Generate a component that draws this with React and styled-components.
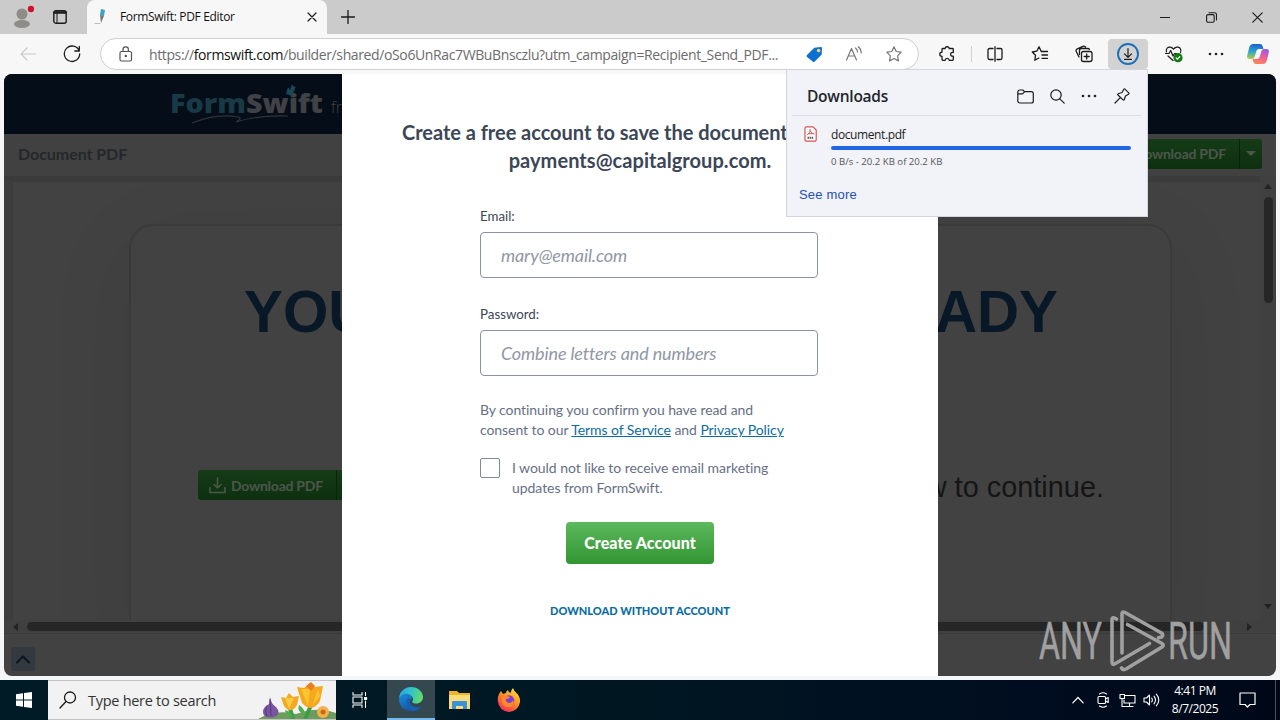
import React from "react";
import styled, { createGlobalStyle, css } from "styled-components";

const ui = `"Open Sans", "Noto Sans", sans-serif`;
const lato = `Lato, "Open Sans", sans-serif`;
const arial = `"Liberation Sans", Arial, sans-serif`;

const GlobalStyle = createGlobalStyle`
  * {
    box-sizing: border-box;
  }
  body {
    margin: 0;
    overflow: hidden;
    background: #f2f3f5;
  }
`;

const Screen = styled.div`
  position: relative;
  width: 1280px;
  height: 720px;
  display: flex;
  flex-direction: column;
  background: #f5f6f8;
  font-family: ${ui};
  overflow: hidden;
`;

const Icon = styled.svg`
  display: block;
  flex: none;
  fill: none;
  stroke: ${(p) => p.$color || "#1b1b1b"};
  stroke-width: ${(p) => p.$stroke || 1.2};
  stroke-linecap: round;
  stroke-linejoin: round;
`;

const Slot = styled.div`
  flex: none;
  width: ${(p) => p.$w || 40}px;
  height: ${(p) => p.$h || 30}px;
  display: flex;
  align-items: center;
  justify-content: center;
`;

/* tab strip */
const TabStrip = styled.div`
  flex: none;
  height: 34px;
  display: flex;
  background: #cbcbcb;
`;
const TabActions = styled.div`
  width: 87px;
  display: flex;
  align-items: center;
  padding-left: 2px;
`;
const Tab = styled.div`
  width: 240px;
  height: 34px;
  display: flex;
  align-items: center;
  padding: 0 10px 0 7px;
  background: #f7f7f7;
  border-radius: 8px 8px 0 0;
`;
const TabTitle = styled.span`
  flex: 1;
  margin-left: 9px;
  font-size: 12px;
  letter-spacing: -0.33px;
  line-height: 18px;
  color: #111;
  white-space: nowrap;
`;
const WindowButtons = styled.div`
  margin-left: auto;
  display: flex;
  align-items: center;
`;

/* address row */
const Toolbar = styled.div`
  flex: none;
  height: 40px;
  display: flex;
  align-items: center;
  padding-left: 8px;
  background: #f7f7f7;
`;
const AddressBar = styled.div`
  width: 819px;
  height: 32px;
  margin: 0 9px 0 4px;
  display: flex;
  align-items: center;
  padding: 0 4px 0 5px;
  background: #fff;
  border: 1px solid #cfcfcf;
  border-radius: 16px;
`;
const Url = styled.span`
  flex: 1;
  margin-left: 3px;
  font-size: 14px;
  letter-spacing: -0.38px;
  color: #6c6c6c;
  white-space: nowrap;
  b {
    font-weight: 400;
    color: #111;
  }
`;
const Separator = styled.div`
  width: 1px;
  height: 16px;
  margin: 0 3px;
  background: #d0d0d0;
`;
const ActiveSlot = styled(Slot)`
  margin: 0 4px;
  background: #d2d2d2;
  border-radius: 4px;
`;

/* web page */
const Page = styled.div`
  flex: none;
  height: 602px;
  margin: 0 4px;
  display: flex;
  flex-direction: column;
  background: #424242;
  border-radius: 8px;
  overflow: hidden;
`;
const SiteHeader = styled.div`
  flex: none;
  height: 60px;
  padding-left: 161px;
  background: #040d18;
`;
const DocBar = styled.div`
  flex: none;
  height: 42px;
  display: flex;
  align-items: center;
  justify-content: space-between;
  padding: 0 14px 3px;
  background: #414141;
`;
const DocName = styled.span`
  font-family: ${lato};
  font-size: 16px;
  font-weight: 700;
  letter-spacing: -0.05px;
  color: #24272b;
`;
const GreenButton = styled.div`
  width: 161px;
  height: 30px;
  display: flex;
  align-items: center;
  background: linear-gradient(#163b17, #0d300e);
  border-radius: 3px;
  color: #4c564c;
  font-family: ${lato};
  font-size: 14px;
  font-weight: 700;
  letter-spacing: -0.25px;
  white-space: nowrap;
`;
const GreenLabel = styled.div`
  flex: 1;
  height: 30px;
  display: flex;
  align-items: center;
  gap: 5px;
  padding-left: 11px;
  border-right: 1px solid #092209;
`;
const Caret = styled.div`
  margin: 0 6px;
  border: 5px solid transparent;
  border-top-color: #4c564c;
  border-bottom: 0;
`;
const Body = styled.div`
  flex: 1;
  display: flex;
  min-height: 0;
`;
const Document = styled.div`
  flex: 1;
  height: 444px;
  padding: 42px 88px 0 116px;
  border-top: 6px solid #3b3b3b;
  border-left: 9px solid #3d3d3d;
  background: #424242;
  overflow: hidden;
`;
const Card = styled.div`
  height: 430px;
  padding: 53px 66px 0 67px;
  display: flex;
  flex-direction: column;
  border: 2px solid #3a3a3a;
  border-radius: 24px;
  box-shadow: 0 20px 90px rgba(0, 0, 0, 0.07);
  background: #424242;
`;
/* the dialog covers the middle of the line */
const BigTitle = styled.div`
  display: flex;
  justify-content: space-between;
  margin: 0 46px;
  font-family: ${arial};
  font-size: 58.3px;
  line-height: 66px;
  font-weight: 700;
  color: #081826;
`;
const CardRow = styled.div`
  margin-top: 125px;
  display: flex;
  align-items: flex-start;
  justify-content: space-between;
`;
const Continue = styled.span`
  font-family: ${arial};
  font-size: 28.9px;
  line-height: 34px;
  color: #151515;
`;
const VScroll = styled.div`
  width: 16px;
  height: 444px;
  display: flex;
  flex-direction: column;
  align-items: center;
  padding: 8px 0 11px;
  background: #404040;
`;
const VThumb = styled.div`
  width: 9px;
  height: 106px;
  margin: 8px 0 auto;
  border-radius: 5px;
  background: #262626;
`;
const Arrow = styled.div`
  border: 4px solid transparent;
  ${(p) =>
    ({
      up: css`border-top: 0; border-bottom: 5px solid #222;`,
      down: css`border-bottom: 0; border-top: 5px solid #222;`,
      left: css`border-left: 0; border-right: 5px solid #222;`,
      right: css`border-right: 0; border-left: 5px solid #222;`,
    })[p.$dir]}
`;
const HScroll = styled.div`
  flex: none;
  height: 14px;
  display: flex;
  align-items: center;
  padding: 0 24px 0 9px;
  background: #404040;
  border-bottom: 1px solid #3a3a3a;
`;
const HThumb = styled.div`
  width: 1177px;
  height: 9px;
  margin: 0 auto 0 9px;
  border-radius: 5px;
  background: #262626;
`;
const Footer = styled.div`
  flex: none;
  height: 42px;
  padding: 13px 7px;
`;
const UpButton = styled.div`
  width: 24px;
  height: 24px;
  display: flex;
  align-items: center;
  justify-content: center;
  border-radius: 3px;
  background: #34383f;
`;

/* sign-up dialog */
const Dialog = styled.div`
  position: absolute;
  left: 342px;
  top: 74px;
  width: 596px;
  height: 602px;
  padding: 44px 60px 0;
  display: flex;
  flex-direction: column;
  align-items: center;
  background: #fff;
  font-family: ${lato};
  font-variant-ligatures: none;
`;
const DialogTitle = styled.h1`
  width: 476px;
  margin: 0;
  font-size: 20px;
  line-height: 28px;
  font-weight: 700;
  letter-spacing: -0.03px;
  color: #3b4656;
  white-space: nowrap;
`;
const TitleAddress = styled.div`
  text-align: center;
  letter-spacing: 0.05px;
`;
const Form = styled.div`
  width: 320px;
  margin-top: 31px;
  display: flex;
  flex-direction: column;
`;
const Label = styled.label`
  height: 22px;
  line-height: 22px;
  margin-bottom: 5px;
  font-size: 13.3px;
  color: #3b4656;
`;
const Input = styled.input`
  width: 338px;
  height: 46px;
  margin-bottom: 25px;
  padding: 0 20px;
  border: 1px solid #8b92a1;
  border-radius: 4px;
  font-family: ${lato};
  font-size: 18px;
  letter-spacing: -0.13px;
  font-variant-ligatures: none;
  &::placeholder {
    color: #8f97a5;
    opacity: 1;
    font-style: italic;
  }
`;
const Terms = styled.div`
  margin-top: -1px;
  font-size: 14px;
  line-height: 20px;
  letter-spacing: -0.07px;
  color: #667085;
  white-space: nowrap;
  span {
    color: #0b6ca3;
    text-decoration: underline;
  }
`;
const CheckRow = styled.div`
  margin-top: 18px;
  display: flex;
  gap: 12px;
  font-size: 14px;
  line-height: 20px;
  letter-spacing: -0.05px;
  color: #667085;
  white-space: nowrap;
`;
const CheckBox = styled.div`
  width: 20px;
  height: 20px;
  border: 1px solid #8088a0;
  border-radius: 2px;
`;
const CreateButton = styled.div`
  width: 148px;
  height: 42px;
  margin-top: 24px;
  border-radius: 4px;
  background: linear-gradient(#5cb85c, #329532);
  color: #fff;
  font-size: 16px;
  line-height: 42px;
  font-weight: 900;
  letter-spacing: 0.1px;
  text-align: center;
`;
const PlainLink = styled.div`
  margin-top: 38px;
  font-size: 11px;
  line-height: 18px;
  font-weight: 900;
  color: #0b6ca3;
`;

/* downloads flyout */
const Flyout = styled.div`
  position: absolute;
  left: 786px;
  top: 69px;
  width: 362px;
  height: 148px;
  padding: 0 5px;
  background: #f1f3f8;
  border: 1px solid #d3d5da;
`;
const FlyoutHeader = styled.div`
  height: 46px;
  display: flex;
  align-items: center;
  padding: 7px 4px 0 15px;
  border-bottom: 1px solid #e0e1e6;
`;
const FlyoutTitle = styled.span`
  margin-right: auto;
  font-size: 15.5px;
  font-weight: 600;
  letter-spacing: -0.25px;
  color: #22262c;
`;
const DownloadItem = styled.div`
  display: flex;
  gap: 14px;
  padding: 10px 11px 0 12px;
`;
const DownloadInfo = styled.div`
  flex: 1;
`;
const FileName = styled.div`
  font-size: 12px;
  line-height: 17px;
  letter-spacing: -0.4px;
  color: #222;
`;
const Progress = styled.div`
  height: 4px;
  margin: 3px 0 4px;
  border-radius: 2px;
  background: #2266e3;
`;
const Speed = styled.div`
  font-size: 9.6px;
  line-height: 15px;
  color: #555;
`;
const SeeMore = styled.div`
  margin: 17px 0 0 7px;
  font-family: ${arial};
  font-size: 13px;
  line-height: 18px;
  letter-spacing: 0.2px;
  color: #2450b5;
`;

/* taskbar */
const Taskbar = styled.div`
  flex: none;
  height: 40px;
  margin-top: 4px;
  display: flex;
  align-items: center;
  background: linear-gradient(90deg, #001b25, #001722 50%, #000d20 80%, #000818);
`;
const SearchBox = styled.div`
  width: 288px;
  height: 40px;
  display: flex;
  align-items: center;
  padding-left: 11px;
  background: #f2f2f2;
  border-top: 1px solid #c4c4c4;
  border-bottom: 1px solid #c4c4c4;
`;
const SearchText = styled.span`
  margin: 0 auto 0 11px;
  font-size: 14.5px;
  letter-spacing: -0.28px;
  color: #333;
  white-space: nowrap;
`;
const RunningApp = styled(Slot)`
  margin-left: 3px;
  background: #35484f;
  border-bottom: 2px solid #76b9ed;
`;
const Tray = styled.div`
  margin-left: auto;
  display: flex;
  align-items: center;
`;
const Clock = styled.div`
  width: 64px;
  font-size: 12px;
  line-height: 18px;
  letter-spacing: -0.45px;
  text-align: center;
  color: #fff;
`;
const DesktopEdge = styled.div`
  width: 5px;
  height: 40px;
  margin-left: 8px;
  border-left: 1px solid #4a5360;
`;

const Watermark = styled.svg`
  position: absolute;
  left: 1036px;
  top: 606px;
`;

const starPath =
  "M9 1.8l2.2 4.7 5 .7-3.6 3.6.9 5.1L9 13.5l-4.5 2.4.9-5.1L1.8 7.200l5-.7z";

function Dots() {
  return (
    <Icon width="16" height="6" viewBox="0 0 16 6">
      {[2, 8, 14].map((x) => (
        <circle key={x} cx={x} cy="3" r="1.3" fill="#222" stroke="none" />
      ))}
    </Icon>
  );
}

function Tabs() {
  return (
    <TabStrip>
      <TabActions>
        <Slot>
          <Icon width="24" height="24" viewBox="0 0 24 24">
            <g stroke="none">
              <circle cx="12" cy="9" r="5.5" fill="#8e8b88" />
              <ellipse cx="12" cy="19" rx="8" ry="4" fill="#8e8b88" />
              <circle cx="21" cy="4" r="3.2" fill="#d1112b" />
            </g>
          </Icon>
        </Slot>
        <Slot $w="36">
          <Icon width="14" height="14" viewBox="0 0 14 14" $stroke="1.4">
            <rect x="0.8" y="0.8" width="12.4" height="12.4" rx="2" />
            <path d="M1.500 2.500h11" strokeWidth="2.500" />
            <path d="M4 3v10" strokeWidth="1" />
          </Icon>
        </Slot>
      </TabActions>
      <Tab>
        <Icon width="17" height="18" viewBox="0 0 17 18">
          <g stroke="none">
            <path d="M7 1l4 1-1 6-4-1z" fill="#38a3c7" />
            <path d="M6 7l4 .8-3 7.2z" fill="#70757a" />
          </g>
          <path d="M1 15.500h5" stroke="#bbb" />
        </Icon>
        <TabTitle>FormSwift: PDF Editor</TabTitle>
        <Icon width="10" height="10" viewBox="0 0 10 10">
          <path d="M1 1l8 8M9 1l-8 8" />
        </Icon>
      </Tab>
      <Slot $w="42" $h="34">
        <Icon width="14" height="14" viewBox="0 0 14 14" $stroke="1.3">
          <path d="M7 .5v13M.5 7h13" />
        </Icon>
      </Slot>
      <WindowButtons>
        <Slot $w="46">
          <Icon width="10" height="10" viewBox="0 0 10 10">
            <path d="M0.500 5.500h9" />
          </Icon>
        </Slot>
        <Slot $w="46">
          <Icon width="11" height="11" viewBox="0 0 11 11" $stroke="1.1">
            <rect x="0.6" y="2.600" width="7.600" height="7.600" rx="1.5" />
            <path d="M3 .7h5.500a2 2 0 0 1 2 2V8" />
          </Icon>
        </Slot>
        <Slot $w="46">
          <Icon width="11" height="11" viewBox="0 0 11 11">
            <path d="M.8.8l9.400 9.400M10.200.8L.8 10.200" />
          </Icon>
        </Slot>
      </WindowButtons>
    </TabStrip>
  );
}

function AddressRow() {
  return (
    <Toolbar>
      <Slot>
        <Icon width="16" height="14" viewBox="0 0 16 14" $color="#cacaca">
          <path d="M15.500 7H1M7 1L1 7l6 6" />
        </Icon>
      </Slot>
      <Slot $w="48">
        <Icon width="18" height="18" viewBox="0 0 18 18" $stroke="1.3">
          <path d="M16.200 6A7.700 7.700 0 1 0 16.700 9M16.300 1.500V6h-4.500" />
        </Icon>
      </Slot>
      <AddressBar>
        <Slot>
          <Icon width="14" height="16" viewBox="0 0 14 16" $color="#555">
            <rect x="1" y="5.500" width="11.500" height="9.500" rx="1.5" />
            <path d="M4 5.300V3.500a2.700 2.700 0 0 1 5.400 0v1.800" />
            <circle cx="6.800" cy="10" r="0.6" fill="#555" />
          </Icon>
        </Slot>
        <Url>
          https://<b>formswift.com</b>/builder/shared/oSo6UnRac7WBuBnsczlu?utm_campaign=Recipient_Send_PDF...
        </Url>
        <Slot>
          <Icon width="17" height="17" viewBox="0 0 17 17">
            <path d="M1 9L8.300 1.800 15 1q1 0 1 1l-.3 6.500L8.700 15.500q-1 1-2 0L1 11q-1-1 0-2z" fill="#0b70d0" stroke="none" />
            <circle cx="12.600" cy="4.600" r="1.800" fill="#f4d35e" stroke="none" />
          </Icon>
        </Slot>
        <Slot>
          <Icon width="18" height="16" viewBox="0 0 18 16" $color="#777">
            <path d="M1.500 14L6.500 2.500 11.500 14M3.200 10h6.600M10.500 2q2 1.500 2 4M13.200.8q3 2.200 3 6.200" />
          </Icon>
        </Slot>
        <Slot>
          <Icon width="18" height="18" viewBox="0 0 18 18" $color="#777">
            <path d={starPath} />
          </Icon>
        </Slot>
      </AddressBar>
      <Slot>
        <Icon width="18" height="18" viewBox="0 0 18 18" $stroke="1.3">
          <path d="M6 3.500a2.200 2.200 0 0 1 4.300 0H13.500q.8 0 .8.800V7.500q-2.700-.4-2.700 1.800t2.700 1.800v3.400q0 .8-.8.8H10.300q-.3-2-2.100-2t-2.200 2H3.800q-.8 0-.8-.8V11.500Q.8 11.300.8 9.300T3 7.200V4.300q0-.8.8-.8z" />
        </Icon>
      </Slot>
      <Separator />
      <Slot>
        <Icon width="16" height="16" viewBox="0 0 16 16" $stroke="1.3">
          <path d="M6 2.500H2.500a1.500 1.500 0 0 0-1.500 1.500v8a1.500 1.500 0 0 0 1.500 1.500H6M10 2.500h3.500a1.500 1.500 0 0 1 1.500 1.500v8a1.500 1.500 0 0 1-1.500 1.500H10M8 .7v14.600" />
        </Icon>
      </Slot>
      <Slot $w="49">
        <Icon width="18" height="18" viewBox="0 0 18 18" $stroke="1.3">
          <path d="M10.200 6.200L8 1.800 5.800 6.200l-4.500.8 3.200 3.300-.7 5 4-2.300M10.200 6.500h6.300M11 10h5.500M11 13.300h5.500" />
        </Icon>
      </Slot>
      <Slot>
        <Icon width="18" height="18" viewBox="0 0 18 18" $stroke="1.3">
          <rect x="6.500" y="6.500" width="10.500" height="10" rx="2" />
          <path d="M11.700 9v5M9.200 11.500h5M4 12L1.300 6.500a2 2 0 0 1 1-2.600L8 1.300q1.500-.5 2.500.7M4.500 9.500V5.500a2 2 0 0 1 2-2h6q1.500 0 2 .8" />
        </Icon>
      </Slot>
      <ActiveSlot>
        <Icon width="22" height="22" viewBox="0 0 22 22">
          <circle cx="11" cy="11" r="10" stroke="#1a6fb8" strokeWidth="1.9" />
          <path d="M11 5.500v8.500M7.500 10.800L11 14.300l3.500-3.500M7.500 16.300h7" />
        </Icon>
      </ActiveSlot>
      <Slot $w="43">
        <Icon width="20" height="18" viewBox="0 0 20 18" $stroke="1.2">
          <path d="M2.500 7C1.500 3.500 4 1.800 6.500 2.200q1.700.4 3 2 1.300-1.600 3-2c3-.7 5.500 1.800 4 5.500M1.500 8.500h3.500l1.700-3 2.300 5.500 1.500-2.500h2M4 11l5 4.500" />
          <circle cx="14" cy="12.700" r="4.600" fill="#107c10" stroke="none" />
          <path d="M12.200 13l1.300 1.200 2.300-2.600" stroke="#fff" />
        </Icon>
      </Slot>
      <Slot $w="42">
        <Dots />
      </Slot>
      <Slot $w="42">
        <Icon width="24" height="22" viewBox="0 0 24 22">
          <defs>
            <linearGradient id="cpA" x1="0.4" y1="0" x2="0.3" y2="1">
              <stop offset="0" stopColor="#1d62c8" />
              <stop offset="0.5" stopColor="#2aa5d0" />
              <stop offset="1" stopColor="#b5cf3d" />
            </linearGradient>
            <linearGradient id="cpB" x1="0.7" y1="0" x2="0.4" y2="1">
              <stop offset="0" stopColor="#9a5be0" />
              <stop offset="0.5" stopColor="#e8609f" />
              <stop offset="1" stopColor="#ff8455" />
            </linearGradient>
          </defs>
          <path d="M7 1h7q2 0 2.700 2.200L17.500 6H13q-2 0-2.600 2L8.500 14q-.6 2-2.500 2H3.500Q.5 16 1.200 12.500l2-8Q4.200 1 7 1z" fill="url(#cpA)" stroke="none" />
          <path d="M17 21h-7q-2 0-2.700-2.200L6.500 16H11q2 0 2.600-2l1.900-6q.6-2 2.500-2h2.500q3 0 2.300 3.500l-2 8Q19.800 21 17 21z" fill="url(#cpB)" stroke="none" />
        </Icon>
      </Slot>
    </Toolbar>
  );
}

function DownloadButton() {
  return (
    <GreenButton>
      <GreenLabel>
        <Icon width="17" height="17" viewBox="0 0 17 17" $color="#4c564c" $stroke="1.6">
          <path d="M8.500 1v10M5 7.500L8.500 11 12 7.500M1 10.500v5h15v-5" />
        </Icon>
        Download PDF
      </GreenLabel>
      <Caret />
    </GreenButton>
  );
}

function WebPage() {
  return (
    <Page>
      <SiteHeader>
        <svg width="210" height="60" viewBox="0 0 210 60" fontFamily="Open Sans">
          <g fontSize="27" fontWeight="800">
            <text x="5" y="39" fill="#183a44" textLength="76" lengthAdjust="spacingAndGlyphs">Form</text>
            <text x="81" y="39" fill="#404246" textLength="77" lengthAdjust="spacingAndGlyphs">Swift</text>
          </g>
          <path d="M121 20l2-7 2 3 2-6 2 3 2-1-4 10z" fill="#1b4654" />
          <path d="M27 49q25-10 46-6 5 1-2 5 22-7 52-6" fill="none" stroke="#303439" strokeWidth="1.2" />
          <text x="166" y="39" fontSize="16" fontWeight="300" fill="#404246">from</text>
        </svg>
      </SiteHeader>
      <DocBar>
        <DocName>Document PDF</DocName>
        <DownloadButton />
      </DocBar>
      <Body>
        <Document>
          <Card>
            <BigTitle>
              <span>YOUR</span>
              <span>READY</span>
            </BigTitle>
            <CardRow>
              <DownloadButton />
              <Continue>below to continue.</Continue>
            </CardRow>
          </Card>
        </Document>
        <VScroll>
          <Arrow $dir="up" />
          <VThumb />
          <Arrow $dir="down" />
        </VScroll>
      </Body>
      <HScroll>
        <Arrow $dir="left" />
        <HThumb />
        <Arrow $dir="right" />
      </HScroll>
      <Footer>
        <UpButton>
          <Icon width="14" height="9" viewBox="0 0 14 9" $color="#0c1420" $stroke="2">
            <path d="M1 7.500l6-6 6 6" />
          </Icon>
        </UpButton>
      </Footer>
    </Page>
  );
}

function SignUpDialog() {
  return (
    <Dialog>
      <DialogTitle>
        Create a free account to save the document
        <TitleAddress>payments@capitalgroup.com.</TitleAddress>
      </DialogTitle>
      <Form>
        <Label>Email:</Label>
        <Input placeholder="mary@email.com" />
        <Label>Password:</Label>
        <Input placeholder="Combine letters and numbers" />
        <Terms>
          By continuing you confirm you have read and
          <br />
          consent to our <span>Terms of Service</span> and <span>Privacy Policy</span>
        </Terms>
        <CheckRow>
          <CheckBox />
          <div>
            I would not like to receive email marketing
            <br />
            updates from FormSwift.
          </div>
        </CheckRow>
      </Form>
      <CreateButton>Create Account</CreateButton>
      <PlainLink>DOWNLOAD WITHOUT ACCOUNT</PlainLink>
    </Dialog>
  );
}

function Downloads() {
  return (
    <Flyout>
      <FlyoutHeader>
        <FlyoutTitle>Downloads</FlyoutTitle>
        <Slot $w="32">
          <Icon width="17" height="15" viewBox="0 0 17 15">
            <path d="M.8 3a2 2 0 0 1 2-2h3l1.700 1.700h6.800a2 2 0 0 1 2 2V12a2 2 0 0 1-2 2H2.800a2 2 0 0 1-2-2zM1 4.800h4.500l2-2" />
          </Icon>
        </Slot>
        <Slot $w="32">
          <Icon width="15" height="15" viewBox="0 0 15 15">
            <circle cx="6" cy="6" r="5.200" />
            <path d="M9.800 9.800l4.400 4.400" />
          </Icon>
        </Slot>
        <Slot $w="32">
          <Dots />
        </Slot>
        <Slot $w="33">
          <Icon width="16" height="16" viewBox="0 0 16 16">
            <path d="M9.800 1.300q.7-.7 1.400 0l3.500 3.500q.7.700-.3 1.400L11.500 8l-1.300 3.700q-.4.900-1.200.2L4 7q-.7-.8.200-1.200L8 4.500zM6.300 9.700L1 15" />
          </Icon>
        </Slot>
      </FlyoutHeader>
      <DownloadItem>
        <Icon width="13" height="16" viewBox="0 0 13 16" $color="#d9534f">
          <path d="M1 2.200A1.400 1.400 0 0 1 2.400.8H9l3.200 3.200v9.800a1.400 1.400 0 0 1-1.400 1.400H2.400A1.400 1.400 0 0 1 1 13.800z" fill="#fff" />
          <path d="M6.300 3.500q.5 3-3 5.500M6.300 5q1 3 3.700 3M4.500 7.700h4" strokeWidth="1" />
          <path d="M3.500 11.800h6" stroke="#555" strokeWidth="2" strokeDasharray="1.5 .6" strokeLinecap="butt" />
        </Icon>
        <DownloadInfo>
          <FileName>document.pdf</FileName>
          <Progress />
          <Speed>0 B/s - 20.2 KB of 20.2 KB</Speed>
        </DownloadInfo>
      </DownloadItem>
      <SeeMore>See more</SeeMore>
    </Flyout>
  );
}

function AnyRun() {
  return (
    <Watermark width="242" height="70" viewBox="0 0 242 70">
      <g fill="#a0a0a0" stroke="#a0a0a0" strokeWidth="0.5" fontFamily="Roboto" fontSize="51.5">
        <text x="3" y="53" textLength="63" lengthAdjust="spacingAndGlyphs">ANY</text>
        <text x="132" y="53" textLength="64" lengthAdjust="spacingAndGlyphs">RUN</text>
      </g>
      <g fill="none" stroke="#a0a0a0" strokeWidth="3.600" strokeLinejoin="round" strokeLinecap="round">
        <path d="M80.500 13q-4.500-3-4.500 1V56q0 3.500 3 1.800L113.500 37.500" />
        <path d="M86 47V8Q86 5 89 6.500L125.500 27q2.500 2 0 4l-3 .8" />
        <path d="M91.500 18.500L126 37.500q2.500 1.500 0 3.500L90 63q-3 1.500-4.500-1" />
      </g>
    </Watermark>
  );
}

function SearchArt() {
  return (
    <svg width="78" height="38" viewBox="0 0 78 38">
      <path d="M0 38Q18 28 38 33q22-8 40-1v6z" fill="#6e9c5c" />
      <path d="M31 24l4 14M54 22l-7 16" stroke="#3f9b47" strokeWidth="4" fill="none" />
      <path d="M48 34q-10-3-7-10 5 3 7 10M35 37q-8-3-8-8 6 1 8 8" fill="#51ae50" />
      <path d="M12 16q1 7 6 10 6 7-2 10-11 2-11-5 0-5 6-8z" fill="#77559f" />
      <path d="M12 18l1 17M9 25q-3 6 0 10" stroke="#54377c" fill="none" />
      <path d="M23 16l5 1 3-5 4 4 6-1-2 9q-6 10-13 1z" fill="#f3a821" />
      <path d="M27 17l4 11 5-11" fill="#ffcb45" />
      <path d="M39 6l7 1 6-5 5 4 8-1-3 15q-8 13-18 2z" fill="#f5a81e" />
      <path d="M43 8l7 17 2-17zM60 8l-6 17 8-10z" fill="#fcc42f" />
      <path d="M48 5l5-4 4 4-4 5z" fill="#e98020" />
      <circle cx="65" cy="31" r="6" fill="#f5b04a" />
      <circle cx="65" cy="31" r="2.5" fill="#c96a1b" />
    </svg>
  );
}

function EdgeLogo() {
  return (
    <svg width="26" height="26" viewBox="0 0 26 26">
      <defs>
        <linearGradient id="edgeTop" x1="0" y1="0.3" x2="1" y2="0.5">
          <stop offset="0" stopColor="#2aa7e8" />
          <stop offset="0.55" stopColor="#35c7c0" />
          <stop offset="1" stopColor="#66dd62" />
        </linearGradient>
        <linearGradient id="edgeLow" x1="0" y1="0" x2="0.8" y2="1">
          <stop offset="0" stopColor="#1b8ddd" />
          <stop offset="1" stopColor="#114a98" />
        </linearGradient>
      </defs>
      <path d="M1 12C2 5 7 1 13 1c7 0 12 5 12 10 0 4-3 6.500-7 6.500-3 0-4.500-1-3.500-2.500 2-3-1-6-4.500-6-4 0-8 2-9 3z" fill="url(#edgeTop)" />
      <path d="M1 13c1-4 5-6 9-5 3 .5 4.500 3 4.500 4.500-4 1-5 9 4 9 2 0 4-.5 5-1.200-2 3.200-6 5-10.500 4.700C6 25 1 20 1 13z" fill="url(#edgeLow)" />
      <path d="M10 12q-3 5 0 10 2 2 4 3 6 0 9.500-4.700-4 2-8 .5-5-2.500-3.500-7.300z" fill="#1460b4" />
    </svg>
  );
}

function FirefoxLogo() {
  return (
    <svg width="24" height="24" viewBox="0 0 24 24">
      <defs>
        <linearGradient id="fox" x1="0.8" y1="0" x2="0.2" y2="1">
          <stop offset="0" stopColor="#ffe83d" />
          <stop offset="0.45" stopColor="#ff9026" />
          <stop offset="1" stopColor="#f1255c" />
        </linearGradient>
      </defs>
      <path d="M2 6l2-3 2 3 3-1q0-2 2-3 0 2 2.500 3 .5-3 2.500-5 1 3 3.500 5 4 4 3.500 9-1.500 9-11 10Q2 23 .8 13 .5 9 2 6z" fill="url(#fox)" />
      <circle cx="12" cy="12.500" r="5.200" fill="#7a3fd0" />
      <path d="M5 9q4-2 8 0-1 2-4 2-1 3 3 4 3 0 4-3 2 6-4 7-7 0-7-6z" fill="#ff8a2a" />
    </svg>
  );
}

function TaskbarRow() {
  return (
    <Taskbar>
      <Slot $w="48" $h="40">
        <svg width="16" height="16" viewBox="0 0 16 16" fill="#fff">
          <path d="M0 2.200l7-1v6.300H0zM8 1l8-1v7.500H8zM0 8.500h7v6.300l-7-1zM8 8.500h8V16l-8-1z" />
        </svg>
      </Slot>
      <SearchBox>
        <Icon width="18" height="18" viewBox="0 0 18 18" $stroke="1.3">
          <circle cx="11" cy="6.500" r="5.500" />
          <path d="M7 10.500L1 17" />
        </Icon>
        <SearchText>Type here to search</SearchText>
        <SearchArt />
      </SearchBox>
      <Slot $w="48">
        <Icon width="16" height="16" viewBox="0 0 16 16" $color="#fff" $stroke="1.1">
          <path d="M1 .5v2.500h9V.5M1 15.500V13h9v2.500M1 5h9v6H1zM13.500.5v3M13.500 9v6.500" />
          <rect x="12.600" y="5.500" width="2" height="2" fill="#fff" />
        </Icon>
      </Slot>
      <RunningApp $w="48" $h="40">
        <EdgeLogo />
      </RunningApp>
      <Slot $w="49">
        <svg width="22" height="20" viewBox="0 0 22 20">
          <path d="M0 1h8l2 2h11v16H0z" fill="#f0b429" />
          <path d="M0 5h21v14H0z" fill="#fbdc7d" />
          <path d="M3 19v-7q0-1 1-1h13q1 0 1 1v7h-4v-3H7v3z" fill="#3b93d4" />
        </svg>
      </Slot>
      <Slot $w="49">
        <FirefoxLogo />
      </Slot>
      <Tray>
        <Slot $w="26">
          <Icon width="12" height="8" viewBox="0 0 12 8" $color="#fff">
            <path d="M.8 6.800L6 1.500l5.200 5.300" />
          </Icon>
        </Slot>
        <Slot $w="24">
          <Icon width="12" height="16" viewBox="0 0 12 16" $color="#fff" $stroke="1.1">
            <rect x="1" y="4.500" width="7.500" height="7" rx="1" />
            <path d="M8.500 7l2.700-1.500v5L8.500 9M2.500 2Q6-.5 9.500 2M2.500 14q3.500 2.500 7 0" />
          </Icon>
        </Slot>
        <Slot $w="24">
          <Icon width="17" height="15" viewBox="0 0 17 15" $color="#fff" $stroke="1.1">
            <path d="M6 2.500h10v7.500H5V7M10.500 10v3.500M7 13.500h7M1 1.500h4.500v4H1zM3 5.500V13.500h3" />
          </Icon>
        </Slot>
        <Slot $w="24">
          <Icon width="17" height="14" viewBox="0 0 17 14" $color="#fff" $stroke="1.1">
            <path d="M1 5v4h2.500L6.500 12V2L3.500 5zM8.700 5q1.300 2 0 4M11 3.200q3 3.800 0 7.600M13.300 1.200q5 5.800 0 11.600" />
          </Icon>
        </Slot>
        <Clock>
          4:41 PM
          <br />
          8/7/2025
        </Clock>
        <Slot $w="40">
          <Icon width="17" height="17" viewBox="0 0 17 17" $color="#fff">
            <path d="M1 1h15v11.500h-5L8.500 15 6 12.500H1z" />
          </Icon>
        </Slot>
        <DesktopEdge />
      </Tray>
    </Taskbar>
  );
}

export default function App() {
  return (
    <>
      <GlobalStyle />
      <Screen>
        <Tabs />
        <AddressRow />
        <WebPage />
        <TaskbarRow />
        <SignUpDialog />
        <Downloads />
        <AnyRun />
      </Screen>
    </>
  );
}
